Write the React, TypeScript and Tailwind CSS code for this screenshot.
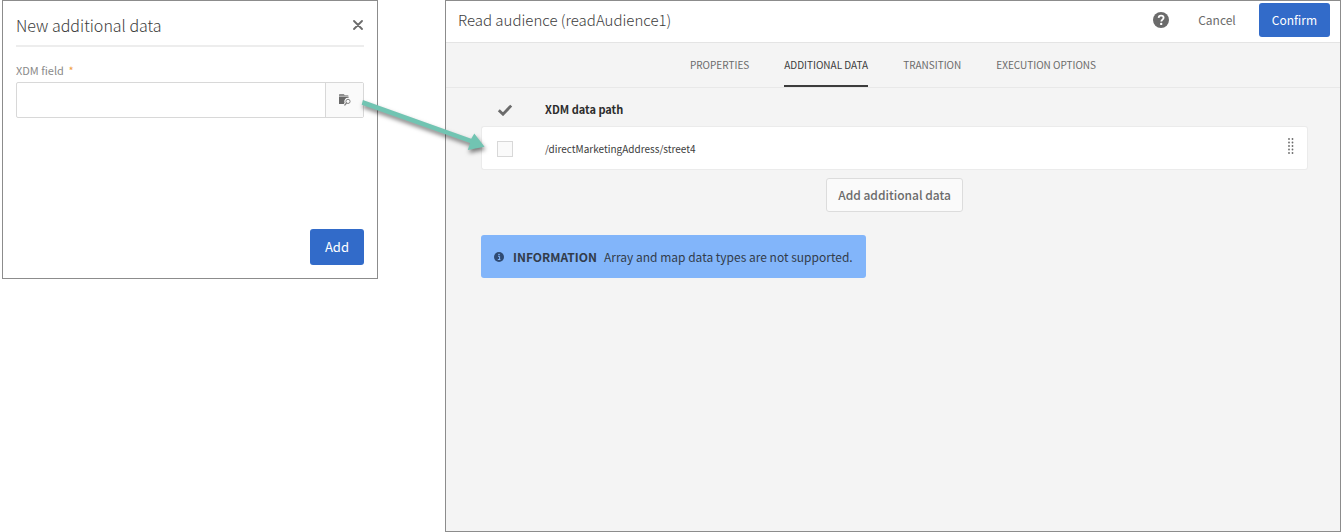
import React from "react";

const TABS = ["PROPERTIES", "ADDITIONAL DATA", "TRANSITION", "EXECUTION OPTIONS"];
const ROWS = ["/directMarketingAddress/street4"];

function FolderSearchIcon() {
  return (
    <svg width="12" height="12" viewBox="0 0 12 12" aria-hidden="true">
      <path d="M0 2V.8C0 .3.3 0 .8 0h4l1 1.200h3c.4 0 .7.3.7.800z" fill="#8f8f8f" />
      <path d="M0 2.600h9.500v1.400A3.400 3.400 0 0 0 5.600 8.800L4.800 10H0z" fill="#686868" />
      <circle cx="9" cy="7.400" r="2.100" fill="none" stroke="#858585" strokeWidth="1" />
      <path d="M7.500 9 5.800 11" stroke="#858585" strokeWidth="1.200" strokeLinecap="round" />
    </svg>
  );
}

function DataDialog() {
  return (
    <section
      aria-labelledby="dialog-title"
      className="flex min-h-[279px] w-[376px] shrink-0 flex-col border border-[#8c8c8c] bg-white px-[13px] pb-[13px]"
    >
      <header className="flex h-[46px] items-center justify-between border-b-2 border-[#ededed] pt-[3px]">
        <h2 id="dialog-title" className="text-base leading-6 font-light text-[#3c3c3c]">
          New additional data
        </h2>
        <button type="button" aria-label="Close" className="p-px text-[#6b6b6b]">
          <svg width="10" height="10" viewBox="0 0 10 10" aria-hidden="true">
            <path d="M1 1l8 8M9 1L1 9" stroke="currentColor" strokeWidth="1.800" strokeLinecap="round" />
          </svg>
        </button>
      </header>
      <label htmlFor="xdm-field" className="mt-[13px] text-[11px] leading-5 text-[#8a8a8a]">
        XDM field <span className="ml-[2px] text-[#f0a040]">*</span>
      </label>
      <div className="mt-[2px] flex h-9 rounded-[2px] border border-[#d8d8d8]">
        <input id="xdm-field" type="text" required className="min-w-0 flex-1 px-3 text-xs outline-none" />
        <button
          type="button"
          aria-label="Select a field"
          className="flex w-[38px] items-center justify-center border-l border-[#d8d8d8] bg-[#fafafa]"
        >
          <FolderSearchIcon />
        </button>
      </div>
      <button type="button" className="mt-auto h-9 self-end rounded-[3px] bg-[#326bc9] px-[15px] text-[13px] text-white">
        Add
      </button>
    </section>
  );
}

function ActivityPanel() {
  return (
    <section
      aria-labelledby="panel-title"
      className="flex min-h-screen min-w-0 flex-1 flex-col border border-[#8c8c8c] bg-[#f4f4f4]"
    >
      <header className="flex h-[42px] items-center border-b border-[#e4e4e4] bg-white pr-[10px] pb-[3px] pl-3">
        <h1 id="panel-title" className="mr-auto text-[15px] leading-6 font-light text-[#3c3c3c]">
          Read audience (readAudience1)
        </h1>
        <button type="button" aria-label="Help">
          <svg width="16" height="16" viewBox="0 0 16 16" aria-hidden="true">
            <circle cx="8" cy="8" r="8" fill="#6b6b6b" />
            <path d="M5.6 5.9C5.7 4.4 6.7 3.6 8.1 3.6c1.500 0 2.500.8 2.500 2.100 0 1.900-2.300 1.900-2.300 3.900" fill="none" stroke="#fff" strokeWidth="1.8" />
            <circle cx="8.200" cy="11.900" r="1.200" fill="#fff" />
          </svg>
        </button>
        <button type="button" className="mr-[18px] ml-6 px-[5px] text-xs text-[#6b6b6b]">
          Cancel
        </button>
        <button type="button" className="h-[34px] rounded-[3px] bg-[#326bc9] px-[13px] text-xs text-white">
          Confirm
        </button>
      </header>

      <nav aria-label="Activity settings" className="flex h-[45px] justify-center gap-[35px] border-b border-[#e8e8e8]">
        {TABS.map((tab) => (
          <a
            key={tab}
            href="#"
            aria-current={tab === "ADDITIONAL DATA" ? "page" : undefined}
            className={
              tab === "ADDITIONAL DATA"
                ? "border-b-2 border-[#3c3c3c] text-[10px] leading-[44px] text-[#3c3c3c]"
                : "text-[10px] leading-[44px] text-[#6b6b6b]"
            }
          >
            {tab}
          </a>
        ))}
      </nav>

      <div className="flex flex-col pr-8 pl-[35px]">
        <table className="w-full border-separate border-spacing-0 text-left">
          <thead>
            <tr className="h-[38px]">
              <th className="w-16 pt-[6px] pl-4">
                <svg width="16" height="12" viewBox="0 0 16 12" role="img" aria-label="Selected">
                  <path d="M1.800 6.200 6 10.200 14.200 1.600" fill="none" stroke="#6b6b6b" strokeWidth="2.800" />
                </svg>
              </th>
              <th className="pt-1 text-[11px] font-bold text-[#2c2c2c]">XDM data path</th>
              <th className="w-[34px]" aria-label="Reorder" />
            </tr>
          </thead>
          <tbody>
            {ROWS.map((path) => (
              <tr key={path} className="h-[44px]">
                <td className="rounded-l-[3px] border border-r-0 border-[#ebebeb] bg-white pl-[15px]">
                  <input
                    type="checkbox"
                    aria-label={path}
                    className="mt-[2px] block size-4 appearance-none border border-[#d8d8d8] bg-[#fafafa]"
                  />
                </td>
                <td className="border-y border-[#ebebeb] bg-white text-[10px] text-[#3c3c3c]">{path}</td>
                <td className="rounded-r-[3px] border border-l-0 border-[#ebebeb] bg-white">
                  <button type="button" aria-label="Move row" className="mx-auto block pb-[3px]">
                    <svg width="6" height="18" viewBox="0 0 6 18" fill="#6b6b6b" aria-hidden="true">
                      {[1, 4.5, 8, 11.5, 15].map((y) => (
                        <g key={y}>
                          <circle cx="1" cy={y} r="0.9" />
                          <circle cx="4.5" cy={y} r="0.9" />
                        </g>
                      ))}
                    </svg>
                  </button>
                </td>
              </tr>
            ))}
          </tbody>
        </table>

        <button
          type="button"
          className="mt-2 h-[34px] self-center rounded-[3px] border border-[#dcdcdc] bg-[#fafafa] px-[11px] text-xs font-medium text-[#6b6b6b]"
        >
          Add additional data
        </button>

        <div role="note" className="mt-[23px] flex h-[43px] items-center self-start rounded-[3px] bg-[#82b5fa] px-[13px] text-xs text-[#323c4b]">
          <svg width="10" height="10" viewBox="0 0 10 10" aria-hidden="true" className="mr-[9px]">
            <circle cx="5" cy="5" r="5" fill="#2f4a72" />
            <path d="M4 4.300h1.600v3M3.800 7.500h2.600" fill="none" stroke="#82b5fa" strokeWidth="1" />
            <circle cx="5" cy="2.500" r="0.800" fill="#82b5fa" />
          </svg>
          <strong className="mr-[7px] font-bold">INFORMATION</strong>
          <span>Array and map data types are not supported.</span>
        </div>
      </div>
    </section>
  );
}

function LinkArrow() {
  return (
    <svg
      width="140"
      height="70"
      viewBox="0 0 140 70"
      aria-hidden="true"
      className="pointer-events-none absolute top-[90px] left-[352px] [filter:drop-shadow(1px_3px_2px_rgba(0,0,0,0.5))]"
    >
      <path d="M10.900 10.100 119.200 48.800 122.300 43.600 132.500 56.800 115.800 60 118.100 53 9.700 14.700z" fill="#71c4b2" />
    </svg>
  );
}

export default function App() {
  return (
    <main className="relative flex min-h-screen items-start gap-[67px] bg-white pl-[2px] font-['Noto_Sans_CJK_SC',sans-serif]">
      <DataDialog />
      <ActivityPanel />
      <LinkArrow />
    </main>
  );
}
